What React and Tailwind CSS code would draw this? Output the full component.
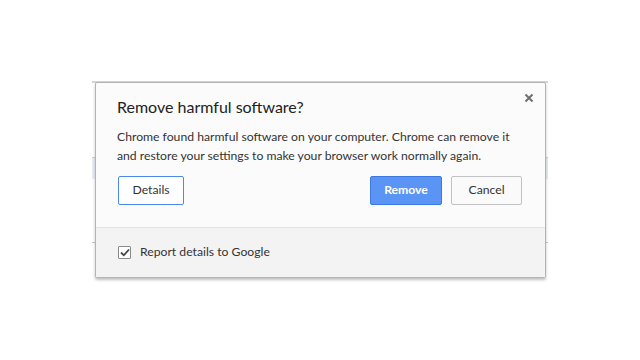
import React from 'react';

const font = { fontFamily: 'Lato, "Open Sans", Arial, sans-serif' };

const App = () => {
  return (
    <div className="relative w-[640px] h-[360px] bg-white overflow-hidden" style={font}>
      {/* page behind the dialog */}
      <div className="absolute left-[92px] top-[81px] w-[456px] h-[200px] border-t-2 border-[#d4d4d4]">
        <div className="mt-[74px] h-[22px] bg-[#e8edf8] border-t border-[#c5d2ee]" />
        <div className="mt-[63px] h-px bg-[#c8c8c8]" />
      </div>

      {/* dialog */}
      <div className="absolute left-[95px] top-[82px] w-[451px] h-[196px] bg-[#fbfbfb] border border-[#b4b4b4] rounded-[2px] shadow-[0_2px_3px_rgba(0,0,0,0.25)] flex flex-col text-[#333]">
        <button className="absolute right-[11px] top-[10px] text-[#6f6f6f]">
          <svg width="10" height="10" viewBox="0 0 10 10">
            <path d="M1.5 1.5 L8.5 8.5 M8.5 1.5 L1.5 8.5" stroke="currentColor" strokeWidth="2" />
          </svg>
        </button>

        <div className="flex-1 pl-[21px] pr-[10px] pt-[13px]">
          <h1 className="text-[16px] leading-[22px] text-[#222]">Remove harmful software?</h1>
          <p className="mt-[9px] text-[12.2px] leading-[19px] text-[#333] whitespace-nowrap">
            Chrome found harmful software on your computer. Chrome can remove it
            <br />
            and restore your settings to make your browser work normally again.
          </p>
          <div className="mt-[11px] pr-[13px] flex items-center">
            <button className="ml-px w-[66px] h-[29px] rounded-[2px] border border-[#4d88ec] bg-white text-[12.2px] text-[#333]">
              Details
            </button>
            <div className="flex-1" />
            <button className="w-[72px] h-[29px] rounded-[2px] border border-[#3c78e0] bg-[#5a95f6] text-[12.2px] font-bold text-white">
              Remove
            </button>
            <button className="ml-[9px] w-[71px] h-[29px] rounded-[2px] border border-[#c2c2c2] bg-[#fafafa] text-[12.2px] text-[#333]">
              Cancel
            </button>
          </div>
        </div>

        <div className="h-[50px] shrink-0 bg-[#f3f3f3] border-t border-[#e2e2e2] flex items-center pl-[22px]">
          <span className="w-[13px] h-[13px] border border-[#8a8a8a] bg-white rounded-[1px] flex items-center justify-center">
            <svg width="10" height="9" viewBox="0 0 10 9">
              <path d="M1 4.5 L3.8 7.3 L9 1.5" fill="none" stroke="#444" strokeWidth="1.8" />
            </svg>
          </span>
          <span className="ml-[9px] text-[12.2px] text-[#333]">Report details to Google</span>
        </div>
      </div>
    </div>
  );
};

export default App;
